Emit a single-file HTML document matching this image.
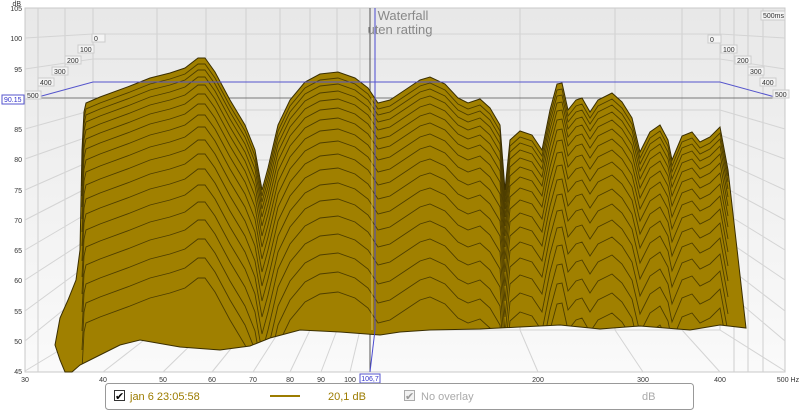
<!DOCTYPE html>
<html><head><meta charset="utf-8"><style>
html,body{margin:0;width:800px;height:411px;background:#fff;overflow:hidden;font-family:"Liberation Sans",sans-serif}
svg{display:block}
</style></head><body>
<svg width="800" height="411" viewBox="0 0 800 411" xmlns="http://www.w3.org/2000/svg" font-family="Liberation Sans, sans-serif">
<defs>
<linearGradient id="bg" x1="0" y1="0" x2="0" y2="1"><stop offset="0" stop-color="#e8e8e8"/><stop offset="1" stop-color="#fafafa"/></linearGradient>
<path id="top" d="M82,150 L84,112 L86,103 L100,97 L130,86 L150,78 L170,73 L185,68 L198,58 L205,58 L215,72 L230,100 L245,125 L255,150 L262,190 L268,168 L278,125 L290,100 L305,82 L320,74 L338,72 L355,78 L368,88 L378,103 L390,100 L405,90 L420,80 L430,77 L445,84 L458,98 L468,103 L480,99 L490,108 L500,125 L505,190 L510,140 L520,131 L532,135 L542,150 L550,110 L557,84 L562,83 L568,110 L576,100 L582,98 L590,112 L598,100 L612,93 L622,102 L632,118 L640,152 L650,132 L660,125 L668,140 L672,160 L682,136 L692,132 L700,142 L710,137 L720,127 L728,170"/>
<clipPath id="cl"><path id="shape" d="M55,345 L60,318 L68,300 L76,280 L80,250 L82,150 L84,112 L86,103 L100,97 L130,86 L150,78 L170,73 L185,68 L198,58 L205,58 L215,72 L230,100 L245,125 L255,150 L262,190 L268,168 L278,125 L290,100 L305,82 L320,74 L338,72 L355,78 L368,88 L378,103 L390,100 L405,90 L420,80 L430,77 L445,84 L458,98 L468,103 L480,99 L490,108 L500,125 L505,190 L510,140 L520,131 L532,135 L542,150 L550,110 L557,84 L562,83 L568,110 L576,100 L582,98 L590,112 L598,100 L612,93 L622,102 L632,118 L640,152 L650,132 L660,125 L668,140 L672,160 L682,136 L692,132 L700,142 L710,137 L720,127 L728,170 L736,240 L746,328 L720,325 L690,330 L640,326 L600,329 L560,325 L520,327 L480,329 L430,330 L400,332 L380,335 L340,332 L300,330 L270,338 L250,346 L220,350 L180,347 L140,340 L120,345 L100,355 L80,365 L72,372 L65,372 L60,360 Z"/></clipPath>
</defs>
<rect x="25" y="8" width="760" height="364" fill="url(#bg)" stroke="#c8c8c8"/>
<g stroke="#cfcfcf" stroke-width="1">
<line x1="38" y1="8" x2="38" y2="372"/><line x1="65" y1="8" x2="65" y2="372"/><line x1="93" y1="8" x2="93" y2="330"/>
<line x1="157" y1="8" x2="157" y2="330"/><line x1="206" y1="8" x2="206" y2="330"/><line x1="246" y1="8" x2="246" y2="330"/>
<line x1="280" y1="8" x2="280" y2="330"/><line x1="310" y1="8" x2="310" y2="330"/><line x1="337" y1="8" x2="337" y2="330"/>
<line x1="360" y1="8" x2="360" y2="330"/><line x1="520" y1="8" x2="520" y2="330"/><line x1="615" y1="8" x2="615" y2="330"/><line x1="682" y1="8" x2="682" y2="330"/>
<line x1="720" y1="8" x2="720" y2="330"/><line x1="734" y1="8" x2="734" y2="372"/><line x1="748" y1="8" x2="748" y2="372"/><line x1="763" y1="8" x2="763" y2="372"/>
</g>
<g stroke="#d4d4d4">
<line x1="93" y1="34" x2="720" y2="34"/><line x1="93" y1="59" x2="720" y2="59"/><line x1="93" y1="110" x2="720" y2="110"/><line x1="93" y1="135" x2="720" y2="135"/>
<line x1="93" y1="160" x2="720" y2="160"/><line x1="93" y1="185" x2="720" y2="185"/><line x1="93" y1="210" x2="720" y2="210"/><line x1="93" y1="236" x2="720" y2="236"/>
<line x1="93" y1="261" x2="720" y2="261"/><line x1="93" y1="286" x2="720" y2="286"/><line x1="93" y1="311" x2="720" y2="311"/><line x1="93" y1="330" x2="720" y2="330"/>
<line x1="25" y1="38" x2="93" y2="34"/><line x1="25" y1="69" x2="93" y2="59"/><line x1="25" y1="129" x2="93" y2="110"/><line x1="25" y1="159" x2="93" y2="135"/>
<line x1="25" y1="190" x2="93" y2="160"/><line x1="25" y1="220" x2="93" y2="185"/><line x1="25" y1="250" x2="93" y2="210"/><line x1="25" y1="280" x2="93" y2="236"/>
<line x1="25" y1="311" x2="93" y2="261"/><line x1="25" y1="341" x2="93" y2="286"/><line x1="25" y1="371" x2="93" y2="330"/>
<line x1="785" y1="38" x2="720" y2="34"/><line x1="785" y1="69" x2="720" y2="59"/><line x1="785" y1="129" x2="720" y2="110"/><line x1="785" y1="159" x2="720" y2="135"/>
<line x1="785" y1="190" x2="720" y2="160"/><line x1="785" y1="220" x2="720" y2="185"/><line x1="785" y1="250" x2="720" y2="210"/><line x1="785" y1="280" x2="720" y2="236"/>
<line x1="785" y1="311" x2="720" y2="261"/><line x1="785" y1="341" x2="720" y2="286"/><line x1="785" y1="371" x2="720" y2="330"/>
<line x1="103" y1="372" x2="157" y2="330"/><line x1="163" y1="372" x2="206" y2="330"/><line x1="212" y1="372" x2="246" y2="330"/><line x1="253" y1="372" x2="280" y2="330"/>
<line x1="290" y1="372" x2="310" y2="330"/><line x1="321" y1="372" x2="337" y2="330"/><line x1="350" y1="372" x2="360" y2="330"/><line x1="538" y1="372" x2="520" y2="330"/>
<line x1="643" y1="372" x2="615" y2="330"/><line x1="720" y1="372" x2="682" y2="330"/>
</g>
<line x1="25" y1="98" x2="785" y2="98" stroke="#777"/>
<line x1="370" y1="8" x2="370" y2="372" stroke="#555"/>
<use href="#shape" fill="#a08000" stroke="#3a2e00" stroke-width="1"/>
<g clip-path="url(#cl)" fill="none" stroke="#3a2e00" stroke-width="0.9" opacity="0.8">
<use href="#top" transform="translate(0,6)"/><use href="#top" transform="translate(0,12)"/><use href="#top" transform="translate(0,19)"/>
<use href="#top" transform="translate(0,27)"/><use href="#top" transform="translate(0,36)"/><use href="#top" transform="translate(0,46)"/>
<use href="#top" transform="translate(0,57)"/><use href="#top" transform="translate(0,69)"/><use href="#top" transform="translate(0,82)"/>
<use href="#top" transform="translate(0,96)"/><use href="#top" transform="translate(0,111)"/><use href="#top" transform="translate(0,127)"/>
<use href="#top" transform="translate(0,144)"/><use href="#top" transform="translate(0,162)"/><use href="#top" transform="translate(0,181)"/>
<use href="#top" transform="translate(0,200)"/><use href="#top" transform="translate(0,220)"/>
</g>
<line x1="375" y1="8" x2="375" y2="330" stroke="#4a4ad0"/>
<line x1="375" y1="330" x2="370" y2="372" stroke="#4a4ad0"/>
<line x1="372" y1="98" x2="372" y2="330" stroke="#e0d080" opacity="0.8"/>
<polyline points="38,97 93,82 720,82 775,97" fill="none" stroke="#5555cc"/>
<g font-size="7" fill="#333">
<rect x="92" y="34" width="13" height="8" fill="#f4f4f4" stroke="#ccc"/><text x="94" y="41">0</text>
<rect x="78" y="45" width="16" height="8" fill="#f4f4f4" stroke="#ccc"/><text x="80" y="52">100</text>
<rect x="65" y="56" width="16" height="8" fill="#f4f4f4" stroke="#ccc"/><text x="67" y="63">200</text>
<rect x="52" y="67" width="16" height="8" fill="#f4f4f4" stroke="#ccc"/><text x="54" y="74">300</text>
<rect x="38" y="78" width="16" height="8" fill="#f4f4f4" stroke="#ccc"/><text x="40" y="85">400</text>
<rect x="25" y="91" width="16" height="8" fill="#f4f4f4" stroke="#ccc"/><text x="27" y="98">500</text>
<rect x="708" y="35" width="13" height="8" fill="#f4f4f4" stroke="#ccc"/><text x="710" y="42">0</text>
<rect x="721" y="45" width="16" height="8" fill="#f4f4f4" stroke="#ccc"/><text x="723" y="52">100</text>
<rect x="735" y="56" width="16" height="8" fill="#f4f4f4" stroke="#ccc"/><text x="737" y="63">200</text>
<rect x="748" y="67" width="16" height="8" fill="#f4f4f4" stroke="#ccc"/><text x="750" y="74">300</text>
<rect x="760" y="78" width="16" height="8" fill="#f4f4f4" stroke="#ccc"/><text x="762" y="85">400</text>
<rect x="773" y="90" width="16" height="8" fill="#f4f4f4" stroke="#ccc"/><text x="775" y="97">500</text>
<rect x="761" y="11" width="24" height="9" fill="#f4f4f4" stroke="#ccc"/><text x="763" y="18">500ms</text>
</g>
<text x="403" y="20" font-size="13" fill="#888" text-anchor="middle">Waterfall</text>
<text x="400" y="34" font-size="13" fill="#888" text-anchor="middle">uten ratting</text>
<g font-size="7" fill="#333" text-anchor="end">
<text x="21" y="6">dB</text><text x="22" y="11">105</text><text x="22" y="41">100</text><text x="22" y="72">95</text>
<text x="22" y="132">85</text><text x="22" y="162">80</text><text x="22" y="193">75</text><text x="22" y="223">70</text>
<text x="22" y="253">65</text><text x="22" y="283">60</text><text x="22" y="314">55</text><text x="22" y="344">50</text><text x="22" y="374">45</text>
</g>
<rect x="2" y="95" width="22" height="9" fill="#fff" stroke="#5555cc"/>
<text x="4" y="102" font-size="7" fill="#3333cc">90.15</text>
<g font-size="7" fill="#333" text-anchor="middle">
<text x="25" y="382">30</text><text x="103" y="382">40</text><text x="163" y="382">50</text><text x="212" y="382">60</text>
<text x="253" y="382">70</text><text x="290" y="382">80</text><text x="321" y="382">90</text><text x="350" y="382">100</text>
<text x="538" y="382">200</text><text x="643" y="382">300</text><text x="720" y="382">400</text><text x="788" y="382">500 Hz</text>
</g>
<rect x="360" y="374" width="20" height="9" fill="#fff" stroke="#5555cc"/>
<text x="370" y="381" font-size="7" fill="#3333cc" text-anchor="middle">106,7</text>
<rect x="105.5" y="383.5" width="588" height="26" rx="3" fill="#fff" stroke="#999"/>
<rect x="114.5" y="390.5" width="10" height="10" fill="#fff" stroke="#333"/>
<text x="115" y="400" font-size="11" fill="#000">✔</text>
<text x="130" y="400" font-size="11" fill="#9c7c00">jan 6 23:05:58</text>
<line x1="270" y1="396" x2="300" y2="396" stroke="#9c7c00" stroke-width="2"/>
<text x="328" y="400" font-size="11" fill="#9c7c00">20,1 dB</text>
<rect x="404.5" y="390.5" width="10" height="10" fill="#f2f2f2" stroke="#aaa"/>
<text x="405" y="400" font-size="11" fill="#999">✔</text>
<text x="421" y="400" font-size="11" fill="#aaa">No overlay</text>
<text x="642" y="400" font-size="11" fill="#aaa">dB</text>
</svg>
</body></html>
